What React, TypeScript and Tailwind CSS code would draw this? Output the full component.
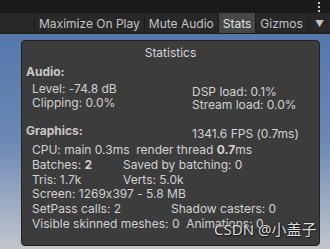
import React from "react"

const font = { fontFamily: "Inter, 'Noto Sans', sans-serif", fontFeatureSettings: '"calt" 0' }

function ToolButton({ label, active }: { label: string; active?: boolean }) {
  return (
    <div
      className={`flex items-center px-[4px] border-l border-[#1c1c1c] ${
        active ? "bg-[#474747] text-[#e0e0e0]" : "text-[#c4c4c4]"
      }`}
    >
      {label}
    </div>
  )
}

export default function App() {
  return (
    <div
      className="w-[330px] h-[249px] overflow-hidden flex flex-col text-[12px] leading-[15px]"
      style={font}
    >
      {/* top bar */}
      <div className="h-[13px] bg-[#1b1b1b] flex justify-end pr-[10px]">
        <div className="flex flex-col gap-[2px] pt-[2px] items-center">
          <span className="w-[2px] h-[2px] bg-[#c8c8c8]" />
          <span className="w-[2px] h-[2px] bg-[#c8c8c8]" />
          <span className="w-[2px] h-[2px] bg-[#c8c8c8]" />
        </div>
      </div>

      {/* game view toolbar */}
      <div className="h-[21px] bg-[#282828] border-b border-[#1e1e1e] flex justify-end">
        <ToolButton label="Maximize On Play" />
        <ToolButton label="Mute Audio" />
        <ToolButton label="Stats" active />
        <div className="flex items-center pl-[4px] pr-[5px] border-l border-[#1c1c1c] text-[#c4c4c4] border-r">
          Gizmos
        </div>
        <div className="flex items-center pl-[6px] pr-[6px] text-[#c4c4c4] text-[9px]">▼</div>
      </div>

      {/* scene */}
      <div className="flex-1 bg-gradient-to-b from-[#5577ac] via-[#6c88b4] to-[#c2c6cc] pt-[6px] pl-[21px] relative">
        <div className="w-[299px] h-[206px] bg-[#3c3c3c] border border-[#202020] rounded-[4px] text-[#d2d2d2] pl-[4px] pt-[4px]">
          <div className="text-center text-[#d6d6d6] pr-[4px]">Statistics</div>

          <div className="font-bold text-[#c8c8c8] mt-[4px]">Audio:</div>
          <div className="flex mt-[3px]">
            <div className="w-[166px] pl-[6px] leading-[14px]">
              <div>Level: -74.8 dB</div>
              <div>Clipping: 0.0%</div>
            </div>
            <div className="pt-[3px] leading-[13px]">
              <div>DSP load: 0.1%</div>
              <div>Stream load: 0.0%</div>
            </div>
          </div>

          <div className="flex mt-[12px]">
            <div className="w-[166px] font-bold text-[#c8c8c8]">Graphics:</div>
            <div className="pt-[3px]">1341.6 FPS (0.7ms)</div>
          </div>
          <div className="pl-[6px] mt-[2px] leading-[14.8px]">
            <div>
              CPU: main 0.3ms&nbsp; render thread <span className="font-bold">0.7</span>ms
            </div>
            <div className="flex">
              <span className="w-[91px]">
                Batches: <span className="font-bold">2</span>
              </span>
              <span>Saved by batching: 0</span>
            </div>
            <div className="flex">
              <span className="w-[91px]">Tris: 1.7k</span>
              <span>Verts: 5.0k</span>
            </div>
            <div>Screen: 1269x397 - 5.8 MB</div>
            <div className="flex">
              <span className="w-[139px]">SetPass calls: 2</span>
              <span>Shadow casters: 0</span>
            </div>
            <div>Visible skinned meshes: 0&nbsp; Animations: 0</div>
          </div>
        </div>

        {/* watermark */}
        <div
          className="absolute left-[214px] top-[186px] text-[15px] leading-[18px] text-[#dcdcdc] [text-shadow:0_0_2px_#000,1px_1px_1px_#222]"
          style={{ fontFamily: "'Noto Sans', 'Noto Sans CJK SC', sans-serif" }}
        >
          CSDN @小盖子
        </div>
      </div>
    </div>
  )
}
